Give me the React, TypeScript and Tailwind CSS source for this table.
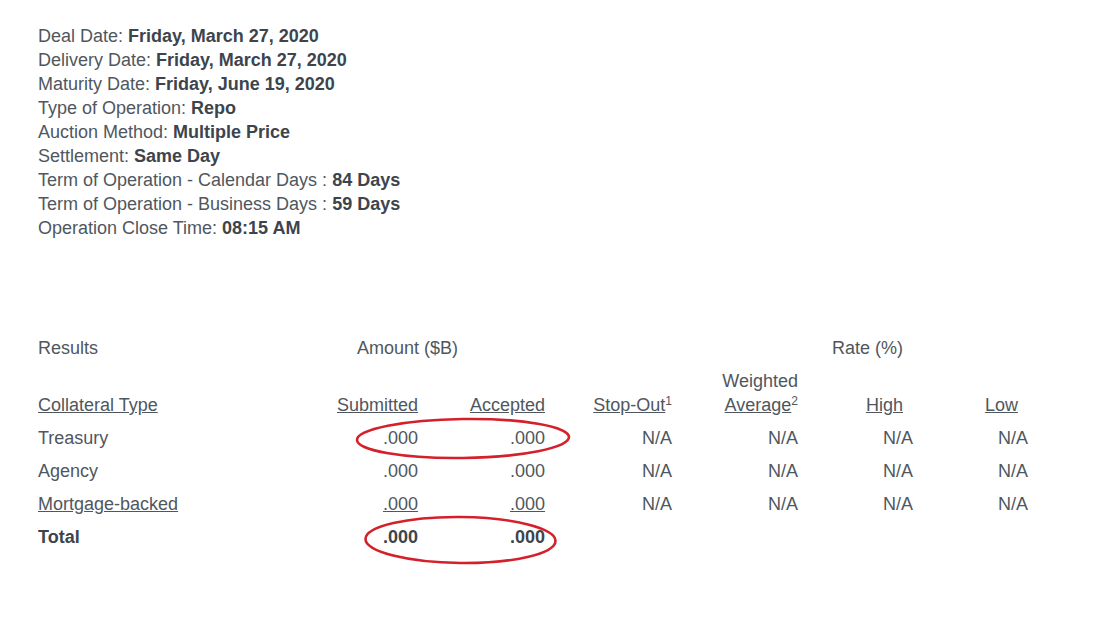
import React from "react";

const details: [string, string][] = [
    ["Deal Date:", "Friday, March 27, 2020"],
    ["Delivery Date:", "Friday, March 27, 2020"],
    ["Maturity Date:", "Friday, June 19, 2020"],
    ["Type of Operation:", "Repo"],
    ["Auction Method:", "Multiple Price"],
    ["Settlement:", "Same Day"],
    ["Term of Operation - Calendar Days :", "84 Days"],
    ["Term of Operation - Business Days :", "59 Days"],
    ["Operation Close Time:", "08:15 AM"],
];

interface rowProps {
    label: string;
    underline?: boolean;
}

const rows: rowProps[] = [
    { label: "Treasury" },
    { label: "Agency" },
    { label: "Mortgage-backed", underline: true },
];

const grid = "grid grid-cols-[255px_125px_127px_127px_126px_115px_115px]";

const App = (): JSX.Element => (
    <div className="relative w-[1097px] h-[624px] bg-white text-[18px] leading-[24px] text-[#4f575e] font-['Liberation_Sans',Arial,sans-serif]">
        <div className="pl-[38px] pt-[24px]">
            {details.map(([label, value], key) => (
                <p key={key}>
                    {label} <span className="font-bold text-[#3c454d]">{value}</span>
                </p>
            ))}
        </div>

        <div className="pl-[38px] mt-[96px]">
            <div className={grid}>
                <p>Results</p>
                <p className="col-span-2 pl-[64px]">Amount ($B)</p>
                <p className="col-span-4 pl-[287px]">Rate (%)</p>
            </div>
            <div className={`${grid} mt-[9px] items-end pb-[4px]`}>
                <p className="underline">Collateral Type</p>
                <p className="text-right underline">Submitted</p>
                <p className="text-right underline">Accepted</p>
                <p className="text-right">
                    <span className="underline">Stop-Out</span>
                    <sup className="text-[12px]">1</sup>
                </p>
                <p className="text-right">
                    Weighted
                    <br />
                    <span className="underline">Average</span>
                    <sup className="text-[12px]">2</sup>
                </p>
                <p className="text-right pr-[10px] underline">High</p>
                <p className="text-right pr-[10px] underline">Low</p>
            </div>
            {rows.map((row, key) => (
                <div key={key} className={`${grid} h-[33px] items-center`}>
                    <p className={row.underline ? "underline" : ""}>{row.label}</p>
                    <p className={`text-right ${row.underline ? "underline" : ""}`}>.000</p>
                    <p className={`text-right ${row.underline ? "underline" : ""}`}>.000</p>
                    <p className="text-right">N/A</p>
                    <p className="text-right">N/A</p>
                    <p className="text-right">N/A</p>
                    <p className="text-right">N/A</p>
                </div>
            ))}
            <div className={`${grid} h-[33px] items-center font-bold text-[#3c454d]`}>
                <p>Total</p>
                <p className="text-right">.000</p>
                <p className="text-right">.000</p>
            </div>
        </div>

        {/* hand drawn red circles */}
        <svg
            className="absolute left-0 top-0 pointer-events-none"
            width="1097"
            height="624"
            viewBox="0 0 1097 624"
        >
            <ellipse
                cx="463"
                cy="438.5"
                rx="106"
                ry="19.5"
                transform="rotate(-0.8 463 438.5)"
                fill="none"
                stroke="#d4202b"
                strokeWidth="2.6"
            />
            <ellipse
                cx="460.5"
                cy="540"
                rx="95"
                ry="23"
                transform="rotate(0.6 460.5 540)"
                fill="none"
                stroke="#d4202b"
                strokeWidth="2.6"
            />
        </svg>
    </div>
);

export default App;
